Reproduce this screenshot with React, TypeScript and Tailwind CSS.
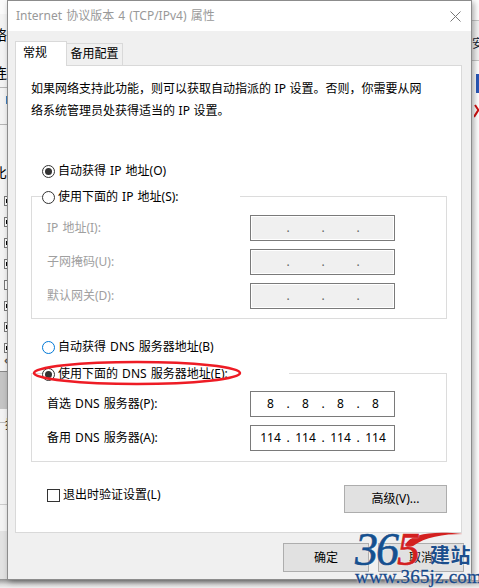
import { ReactNode } from "react";

const FONT = "font-['Noto_Sans','Noto_Sans_CJK_SC',sans-serif]";

const Radio = ({ checked, hover }: { checked?: boolean; hover?: boolean }) => (
  <span
    className={`flex h-[13px] w-[13px] shrink-0 items-center justify-center rounded-full border bg-white ${
      hover ? "border-[#0078d7]" : "border-[#333]"
    }`}
  >
    {checked && <span className="h-[7px] w-[7px] rounded-full bg-[#333]" />}
  </span>
);

const RadioRow = ({
  label,
  checked,
  hover,
}: {
  label: string;
  checked?: boolean;
  hover?: boolean;
}) => (
  <div className="flex h-[16px] items-center gap-[3px] whitespace-pre">
    <Radio checked={checked} hover={hover} />
    <span>{label}</span>
  </div>
);

const IpInput = ({ parts }: { parts?: string[] }) => {
  const values = parts ?? ["", "", "", ""];
  return (
    <div
      className={`flex h-[26px] w-[145px] items-center border border-[#7a7a7a] pl-[8px] ${
        parts ? "bg-white" : "bg-[#f0f0f0] shadow-[inset_0_0_0_1px_#fff]"
      }`}
    >
      {values.map((v, i) => (
        <div key={i} className="flex items-center">
          <span className="w-[23px] text-center">{v}</span>
          {i < 3 && (
            <span
              className={`w-[12px] text-center ${parts ? "" : "text-[#666]"}`}
            >
              .
            </span>
          )}
        </div>
      ))}
    </div>
  );
};

const FieldRow = ({
  label,
  parts,
  disabled,
}: {
  label: string;
  parts?: string[];
  disabled?: boolean;
}) => (
  <div className="flex items-center justify-between pl-[15px] pr-[51px]">
    <span className={`whitespace-pre ${disabled ? "text-[#a0a0a0]" : ""}`}>
      {label}
    </span>
    <IpInput parts={parts} />
  </div>
);

const Group = ({
  legend,
  legendWidth,
  children,
}: {
  legend: ReactNode;
  legendWidth: string;
  children: ReactNode;
}) => (
  <div className="relative ml-[15px] mr-[14px] border border-[#dcdcdc]">
    <div
      className={`absolute -top-[8px] left-[10px] flex bg-white ${legendWidth}`}
    >
      {legend}
    </div>
    {children}
  </div>
);

const Button = ({ label, className }: { label: string; className: string }) => (
  <div
    className={`flex items-center justify-center border border-[#adadad] bg-[#e1e1e1] ${className}`}
  >
    {label}
  </div>
);

// bits of the window behind the dialog
const Backdrop = () => (
  <div className={`absolute inset-0 bg-[#f3f3f3] text-[14px] text-black ${FONT}`}>
    <div className="absolute left-0 top-0 h-[14px] w-[7px] bg-[#fafafa]" />
    <div className="absolute left-0 top-[87px] h-px w-[7px] bg-[#b5b5b5]" />
    <div className="absolute left-0 top-[124px] h-px w-[7px] bg-[#b5b5b5]" />
    <span className="absolute -left-[7px] top-[24px]">络</span>
    <span className="absolute -left-[7px] top-[62px]">连</span>
    <span className="absolute -left-[7px] top-[162px]">比</span>
    <div className="absolute left-[6px] top-[96px] h-[8px] w-px bg-[#3f7fbf]" />
    {[221, 242, 263, 284, 305, 326, 347, 200].map((y) => (
      <div
        key={y}
        style={{ top: y - 4 }}
        className="absolute left-[4px] flex h-[10px] w-[5px] items-center justify-end border border-[#777] bg-white"
      >
        {y !== 284 && <div className="h-[4px] w-[2px] bg-black" />}
      </div>
    ))}
    <span className="absolute left-[4px] top-[350px] text-[11px] font-bold leading-[20px] text-[#555]">
      «
    </span>
    <div className="absolute left-0 top-[371px] h-px w-[7px] bg-[#888]" />
    <div className="absolute left-0 top-[372px] h-[37px] w-[7px] bg-[#c4c4c4]" />
    <span className="absolute left-[5px] top-[416px] text-[12px] leading-[18px]">
      技
    </span>
    <div className="absolute left-0 top-[422px] h-px w-[6px] bg-[#bbb]" />
    <div className="absolute left-0 top-[504px] h-px w-[7px] bg-[#ccc]" />
    <div className="absolute left-0 top-[531px] h-[50px] w-[7px] bg-[#e2e2e2]" />
    <div className="absolute left-0 top-[579px] h-[9px] w-[479px] bg-[linear-gradient(#8f8f8f,#d8d8d8_60%,#f0f0f0)]" />

    <div className="absolute left-[472px] top-0 h-[20px] w-[7px] bg-white" />
    <div className="absolute left-[472px] top-[20px] h-px w-[7px] bg-[#c8c8c8]" />
    <span className="absolute left-[472px] top-[35px] text-[12px] leading-[18px] text-[#123]">
      安
    </span>
    <div className="absolute left-[472px] top-[60px] h-[520px] w-[7px] bg-white" />
    <div className="absolute left-[472px] top-[60px] h-px w-[7px] bg-[#c8c8c8]" />
    <div className="absolute left-[476px] top-[74px] h-[19px] w-[3px] bg-[#2a58b8]" />
    <svg
      className="absolute left-[474px] top-[104px]"
      width="5"
      height="14"
      viewBox="0 0 5 14"
    >
      <path d="M1 1L5 7M5 5L0 13" stroke="#d01010" strokeWidth="2" fill="none" />
    </svg>
  </div>
);

const Watermark = () => (
  <div className="absolute left-[345px] top-[528px] h-[60px] w-[134px] font-['Liberation_Serif',serif]">
    <svg
      className="absolute left-0 top-0"
      width="134"
      height="40"
      viewBox="0 0 134 40"
    >
      <path
        d="M60 17C66 5 90 3 118 6C98 6 80 9 68 18C66 19 61 20 60 17Z"
        fill="#d3201f"
      />
    </svg>
    <div className="absolute left-[10px] top-[-1px] text-[46px] italic leading-[46px] tracking-[-2px] text-[#16508f] [-webkit-text-stroke:0.6px_#16508f] [text-shadow:0_0_2px_#fff]">
      36<span className="text-[#d3201f] [-webkit-text-stroke:0.6px_#d3201f]">5</span>
    </div>
    <div className="absolute left-[85px] top-[14px] text-[20px] font-bold leading-[26px] tracking-[0.5px] text-[#1c4e8c] font-['Noto_Sans_CJK_SC',sans-serif] [text-shadow:0_0_2px_#fff]">
      建站
    </div>
    <div className="absolute left-[10px] top-[39px] text-[19px] leading-[20px] tracking-[0.2px] text-[#17498a] [-webkit-text-stroke:0.3px_#17498a] [text-shadow:0_0_2px_#fff]">
      www.365jz.com
    </div>
  </div>
);

export default function App() {
  return (
    <div className="relative h-[588px] w-[479px] overflow-hidden">
      <Backdrop />

      <div
        className={`absolute left-[7px] top-0 flex h-[580px] w-[465px] flex-col border border-[#8c8c8c] bg-[#f0f0f0] text-[12px] leading-[16px] text-black shadow-[2px_2px_6px_rgba(0,0,0,0.35)] [word-spacing:1px] ${FONT}`}
      >
        {/* title bar */}
        <div className="flex h-[30px] shrink-0 items-center justify-between bg-white pl-[8px] pr-[10px] text-[#999]">
          <span className="whitespace-pre">Internet 协议版本 4 (TCP/IPv4) 属性</span>
          <svg width="11" height="11" viewBox="0 0 11 11">
            <path d="M0.5 0.5L10.5 10.5M10.5 0.5L0.5 10.5" stroke="#777" fill="none" />
          </svg>
        </div>

        {/* tabs */}
        <div className="mt-[9px] flex h-[25px] items-end pl-[7px]">
          <div className="z-10 -mb-px flex h-[25px] w-[52px] items-center border border-b-0 border-[#d9d9d9] bg-white pb-[2px] pl-[7px]">
            常规
          </div>
          <div className="flex h-[22px] w-[56px] items-center justify-center border border-b-0 border-l-0 border-[#d9d9d9] bg-[#f0f0f0] pb-px">
            备用配置
          </div>
        </div>

        {/* panel */}
        <div className="ml-[7px] flex h-[468px] w-[447px] flex-col border border-[#d9d9d9] bg-white">
          <p className="ml-[15px] mt-[12px] w-[412px] leading-[22px] [word-spacing:0.5px]">
            如果网络支持此功能，则可以获取自动指派的 IP 设置。否则，你需要从网
            <br />
            络系统管理员处获得适当的 IP 设置。
          </p>

          <div className="ml-[26px] mt-[41px]">
            <RadioRow label="自动获得 IP 地址(O)" checked />
          </div>

          <div className="mt-[17px]">
            <Group
              legendWidth="w-[198px]"
              legend={<RadioRow label="使用下面的 IP 地址(S):" />}
            >
              <div className="flex flex-col gap-[8px] pb-[9px] pt-[18px] text-[#a0a0a0]">
                <FieldRow disabled label="IP 地址(I):" />
                <FieldRow disabled label="子网掩码(U):" />
                <FieldRow disabled label="默认网关(D):" />
              </div>
            </Group>
          </div>

          <div className="ml-[26px] mt-[20px]">
            <RadioRow label="自动获得 DNS 服务器地址(B)" hover />
          </div>

          <div className="mt-[18px]">
            <Group
              legendWidth="w-[247px]"
              legend={<RadioRow label="使用下面的 DNS 服务器地址(E):" checked />}
            >
              <div className="flex flex-col gap-[8px] pb-[10px] pt-[17px]">
                <FieldRow label="首选 DNS 服务器(P):" parts={["8", "8", "8", "8"]} />
                <FieldRow
                  label="备用 DNS 服务器(A):"
                  parts={["114", "114", "114", "114"]}
                />
              </div>
            </Group>
          </div>

          <div className="ml-[15px] mr-[14px] mt-[23px] flex items-start justify-between pl-[16px]">
            <div className="mt-[2px] flex items-center gap-[3px]">
              <span className="h-[13px] w-[13px] border border-[#333] bg-white" />
              <span>退出时验证设置(L)</span>
            </div>
            <Button label="高级(V)..." className="h-[28px] w-[103px]" />
          </div>
        </div>

        {/* footer buttons */}
        <div className="mt-[10px] flex gap-[9px] pl-[275px]">
          <Button label="确定" className="h-[29px] w-[86px]" />
          <Button label="取消" className="h-[29px] w-[86px]" />
        </div>
      </div>

      <svg
        className="absolute left-[30px] top-[356px]"
        width="216"
        height="34"
        viewBox="0 0 216 34"
      >
        <ellipse
          cx="107"
          cy="17"
          rx="103"
          ry="11"
          fill="none"
          stroke="#ee1c25"
          strokeWidth="2.5"
        />
      </svg>

      <Watermark />
    </div>
  );
}
